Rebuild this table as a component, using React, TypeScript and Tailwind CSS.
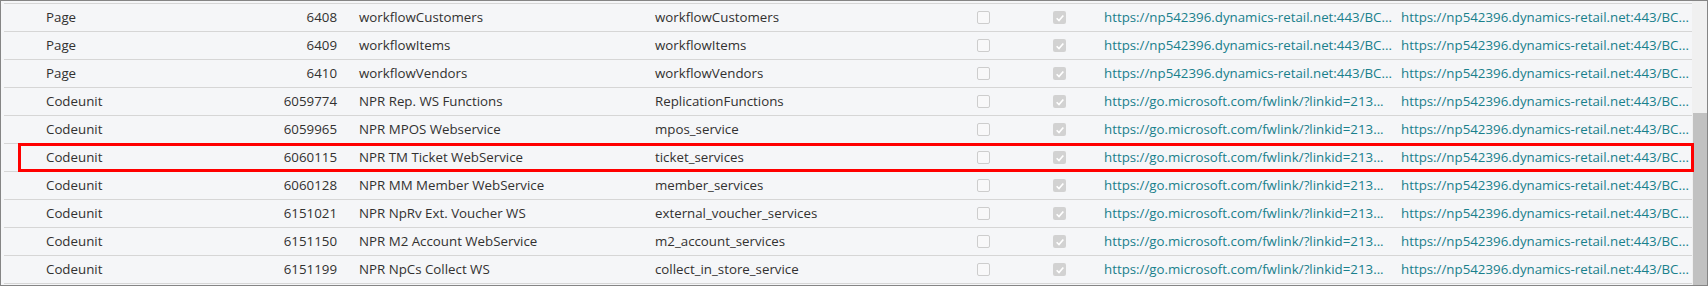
import React from "react";

// One row of the web services list
interface ServiceRow {
  type: string;
  id: number;
  name: string;
  service: string;
  url1: string;
  url2: string;
}

const BC_URL = "https://np542396.dynamics-retail.net:443/BC...";
const FW_URL = "https://go.microsoft.com/fwlink/?linkid=213...";

const rows: ServiceRow[] = [
  { type: "Page", id: 6408, name: "workflowCustomers", service: "workflowCustomers", url1: BC_URL, url2: BC_URL },
  { type: "Page", id: 6409, name: "workflowItems", service: "workflowItems", url1: BC_URL, url2: BC_URL },
  { type: "Page", id: 6410, name: "workflowVendors", service: "workflowVendors", url1: BC_URL, url2: BC_URL },
  { type: "Codeunit", id: 6059774, name: "NPR Rep. WS Functions", service: "ReplicationFunctions", url1: FW_URL, url2: BC_URL },
  { type: "Codeunit", id: 6059965, name: "NPR MPOS Webservice", service: "mpos_service", url1: FW_URL, url2: BC_URL },
  { type: "Codeunit", id: 6060115, name: "NPR TM Ticket WebService", service: "ticket_services", url1: FW_URL, url2: BC_URL },
  { type: "Codeunit", id: 6060128, name: "NPR MM Member WebService", service: "member_services", url1: FW_URL, url2: BC_URL },
  { type: "Codeunit", id: 6151021, name: "NPR NpRv Ext. Voucher WS", service: "external_voucher_services", url1: FW_URL, url2: BC_URL },
  { type: "Codeunit", id: 6151150, name: "NPR M2 Account WebService", service: "m2_account_services", url1: FW_URL, url2: BC_URL },
  { type: "Codeunit", id: 6151199, name: "NPR NpCs Collect WS", service: "collect_in_store_service", url1: FW_URL, url2: BC_URL },
];

function EmptyBox() {
  return <div className="w-[13px] h-[13px] rounded-[2px] border border-[#cdcdcd] bg-[#f8f8f9]" />;
}

function CheckedBox() {
  return (
    <div className="w-[13px] h-[13px] rounded-[2px] bg-[#d2d2d2] flex items-center justify-center">
      <svg viewBox="0 0 12 12" className="w-[10px] h-[10px]">
        <path d="M2 6.3 L4.8 9 L10 3" fill="none" stroke="#ffffff" strokeWidth="2" />
      </svg>
    </div>
  );
}

export default function App() {
  return (
    <div
      className="w-[1708px] h-[286px] border border-[#858585] bg-[#f5f6f8] flex text-[13.3px] text-[#323130] relative overflow-hidden"
      style={{ fontFamily: '"Open Sans", "Noto Sans", sans-serif' }}
    >
      {/* Rows */}
      <div className="w-[1691px] pl-[3px] pt-[2px]">
        <div className="border-t border-[#d6d6d6]">
          {rows.map((r) => (
            <div key={r.id} className="h-[28px] border-b border-[#d6d6d6] flex items-center whitespace-nowrap">
              <div className="w-[162px] pl-[42px]">{r.type}</div>
              <div className="w-[171px] text-right">{r.id}</div>
              <div className="w-[318px] pl-[22px]">{r.name}</div>
              <div className="w-[322px]">{r.service}</div>
              <div className="w-[76px]">
                <EmptyBox />
              </div>
              <div className="w-[51px]">
                <CheckedBox />
              </div>
              <div className="w-[297px] overflow-hidden text-[#19808c]">{r.url1}</div>
              <div className="w-[290px] overflow-hidden text-[#19808c]">{r.url2}</div>
            </div>
          ))}
        </div>
      </div>

      {/* Scrollbar */}
      <div className="w-[15px] bg-[#f0f0f0] flex flex-col justify-end">
        <div className="h-[172px] ml-[1px] bg-[#c1c1c1]" />
      </div>

      {/* Highlight box */}
      <div className="absolute left-[17px] top-[142px] w-[1676px] h-[29px] border-[3px] border-[#ff0000] pointer-events-none" />
    </div>
  );
}
